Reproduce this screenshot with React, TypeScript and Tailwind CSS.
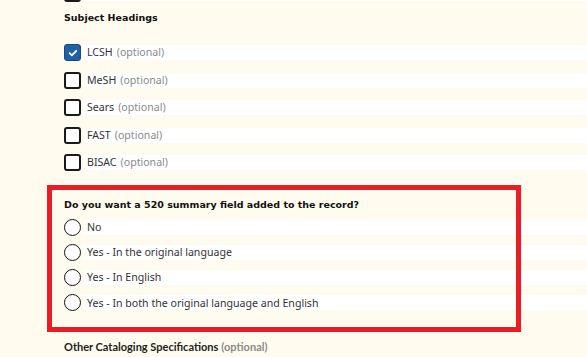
const subjects = [
  { label: "LCSH", checked: true },
  { label: "MeSH", checked: false },
  { label: "Sears", checked: false },
  { label: "FAST", checked: false },
  { label: "BISAC", checked: false },
];

const summaryOptions = [
  "No",
  "Yes - In the original language",
  "Yes - In English",
  "Yes - In both the original language and English",
];

function Checkbox({ checked }: { checked: boolean }) {
  if (checked) {
    return (
      <span className="flex h-[17px] w-[17px] shrink-0 items-center justify-center rounded-[3px] border-[1.5px] border-[#164a82] bg-[#1f60a6]">
        <svg width="10" height="10" viewBox="0 0 12 12" fill="none">
          <path d="M2 6.2l2.6 2.6L10 3.4" stroke="#fff" strokeWidth="2.2" strokeLinecap="round" strokeLinejoin="round" />
        </svg>
      </span>
    );
  }
  return <span className="block h-[17px] w-[17px] shrink-0 rounded-[3px] border-2 border-[#1a1a1a] bg-white" />;
}

function Radio() {
  return <span className="block h-[17px] w-[17px] shrink-0 rounded-full border-[1.5px] border-[#111] bg-white" />;
}

function OptionRow({ control, children }: { control: React.ReactNode; children: React.ReactNode }) {
  return (
    <div className="flex h-[17px] items-center gap-[2px]">
      {control}
      <div className="flex h-[15px] flex-1 items-center bg-white pl-[4px] text-[10.6px] leading-none text-[#333]">
        {children}
      </div>
    </div>
  );
}

export default function App() {
  return (
    <div className="relative min-h-[357px] w-full overflow-hidden bg-[#fffcef] pl-[64px] font-['Noto_Sans',sans-serif]">
      {/* tail of the previous group */}
      <div className="-mt-[15px]">
        <OptionRow control={<Checkbox checked={false} />}>{" "}</OptionRow>
      </div>

      <h3 className="mt-[11px] font-['DejaVu_Sans',sans-serif] text-[9.5px] font-bold leading-none text-[#111]">
        Subject Headings
      </h3>

      <div className="mt-[21.5px] flex flex-col gap-[10.5px]">
        {subjects.map((s) => (
          <OptionRow key={s.label} control={<Checkbox checked={s.checked} />}>
            {s.label}
            <span className="ml-[4px] text-[#8a8a8a]">(optional)</span>
          </OptionRow>
        ))}
      </div>

      <p className="mt-[28.5px] font-['DejaVu_Sans',sans-serif] text-[9.5px] font-bold leading-none text-[#111]">
        Do you want a 520 summary field added to the record?
      </p>

      <div className="mt-[9.5px] flex flex-col gap-[8.3px]">
        {summaryOptions.map((o) => (
          <OptionRow key={o} control={<Radio />}>
            {o}
          </OptionRow>
        ))}
      </div>

      <p className="mt-[30px] font-['Lato',sans-serif] text-[11px] font-bold leading-none text-[#222]">
        Other Cataloging Specifications
        <span className="ml-[3px] text-[#8a8a8a]">(optional)</span>
      </p>

      {/* red highlight annotation */}
      <div className="pointer-events-none absolute left-[47px] top-[185px] h-[147px] w-[474px] border-[5px] border-[#ec1c24]" />
    </div>
  );
}
